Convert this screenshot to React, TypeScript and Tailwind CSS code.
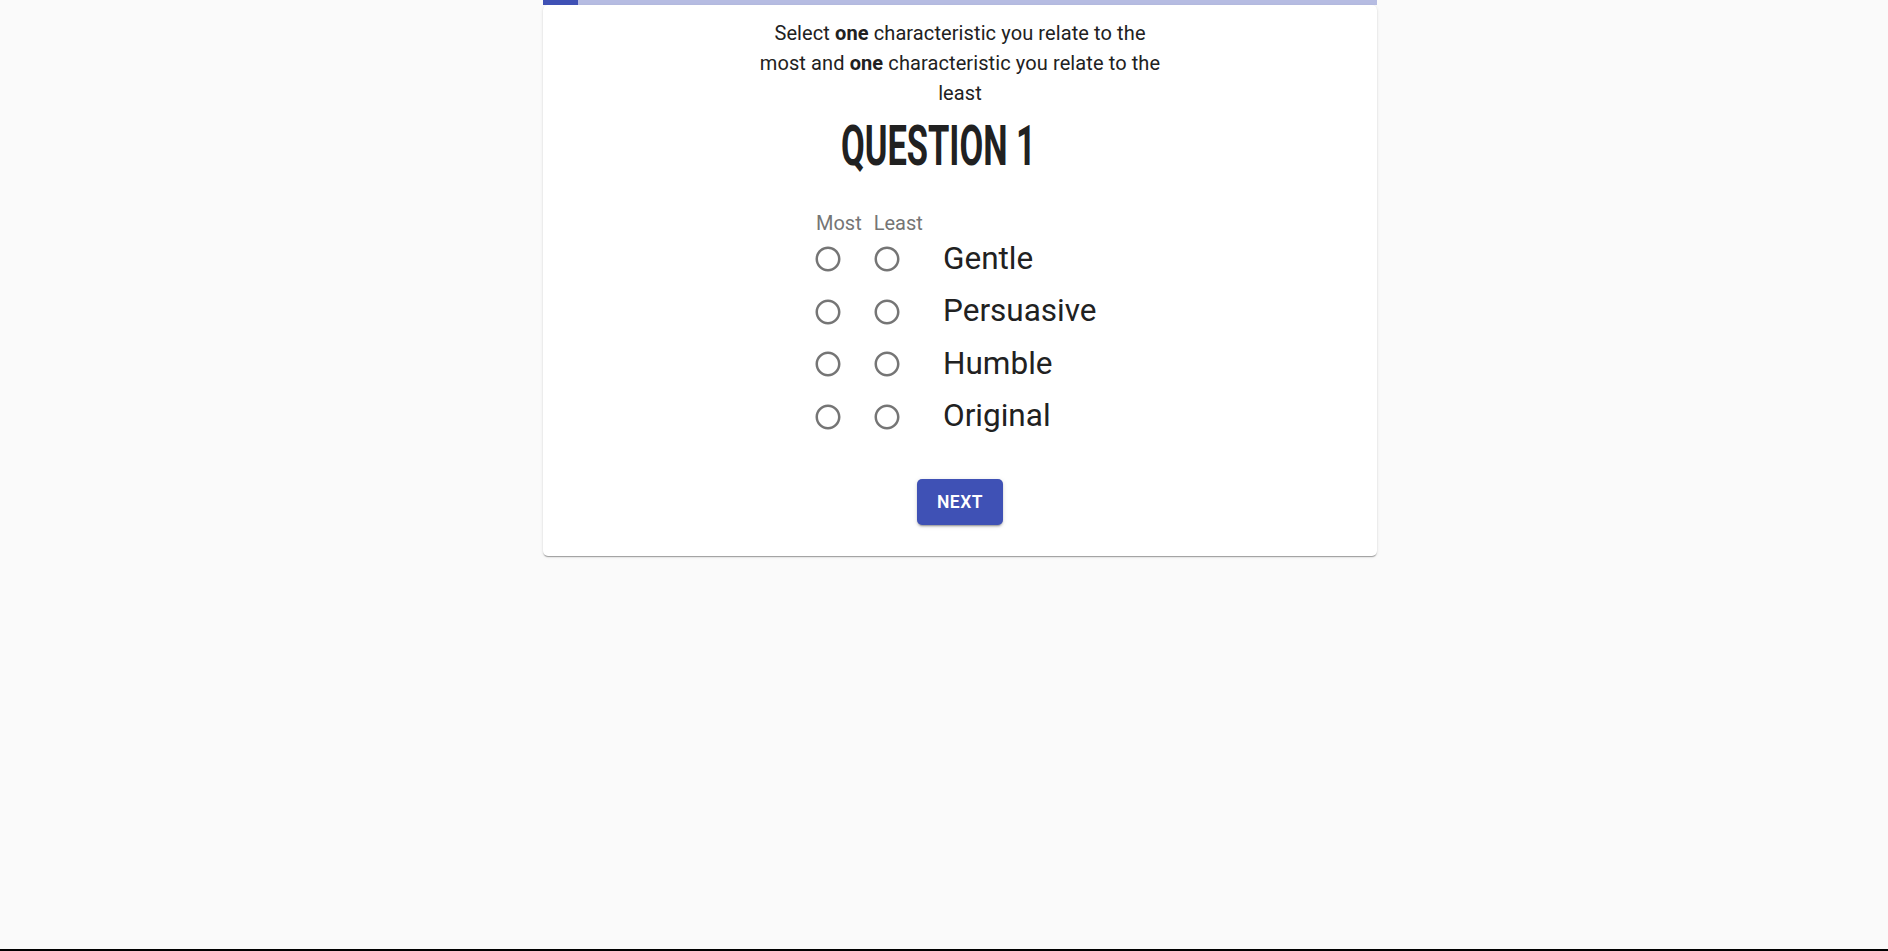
import { useState } from "react";

type Answer = "most" | "least";

const TRAITS = ["Gentle", "Persuasive", "Humble", "Original"];

function RadioIcon({ checked }: { checked: boolean }) {
  return (
    <svg viewBox="0 0 24 24" className="h-[30px] w-[30px]" fill="currentColor">
      <path d="M12 2C6.48 2 2 6.48 2 12s4.48 10 10 10 10-4.48 10-10S17.52 2 12 2zm0 18c-4.42 0-8-3.58-8-8s3.58-8 8-8 8 3.58 8 8-3.58 8-8 8z" />
      {checked && <circle cx="12" cy="12" r="5" />}
    </svg>
  );
}

// One question of the most / least questionnaire
export default function App() {
  const [picks, setPicks] = useState<Record<Answer, string | null>>({
    most: null,
    least: null,
  });

  const pick = (kind: Answer, trait: string) =>
    setPicks((p) => ({ ...p, [kind]: trait }));

  return (
    <div className="min-h-[951px] border-b-2 border-black bg-[#fafafa] font-['Roboto',sans-serif]">
      <div className="flex justify-center pl-[32px]">
        <div className="w-[834px]">
          {/* progress */}
          <div className="flex h-[5px] bg-[#b6bce2]">
            <div className="w-[35px] bg-[#3f51b5]" />
          </div>

          <div className="flex flex-col items-center rounded-[5px] bg-white pb-[31px] pt-[13px] shadow-[0_2px_1px_-1px_rgba(0,0,0,0.2),0_1px_1px_0_rgba(0,0,0,0.14),0_1px_3px_0_rgba(0,0,0,0.12)]">
            <p className="w-[416px] text-center text-[20px] leading-[30px] tracking-[0.1px] text-[#212121]">
              Select <b className="font-bold">one</b> characteristic you relate
              to the most and <b className="font-bold">one</b> characteristic
              you relate to the least
            </p>

            <h1 className="mr-[44px] mt-[10px] scale-x-[0.615] text-[56px] leading-[56px] font-bold text-[#212121]">
              QUESTION 1
            </h1>

            <div className="mt-[37px] self-start pl-[259px]">
              <div className="flex h-[24px] items-center pl-[14px] text-[20px] leading-[24px] text-[#757575]">
                <span>Most</span>
                <span className="ml-[12px]">Least</span>
              </div>

              <div className="-mt-[2px]">
                {TRAITS.map((trait) => (
                  <div key={trait} className="flex h-[52.5px] items-center">
                    <button
                      type="button"
                      onClick={() => pick("most", trait)}
                      className="flex w-[52px] justify-center text-[#757575]"
                    >
                      <RadioIcon checked={picks.most === trait} />
                    </button>
                    <button
                      type="button"
                      onClick={() => pick("least", trait)}
                      className="ml-[7px] flex w-[52px] justify-center text-[#757575]"
                    >
                      <RadioIcon checked={picks.least === trait} />
                    </button>
                    <span className="ml-[30px] pb-[1px] text-[31.5px] leading-[38px] text-[#212121]">
                      {trait}
                    </span>
                  </div>
                ))}
              </div>
            </div>

            <button
              type="button"
              className="mt-[36px] h-[46px] w-[86px] rounded-[5px] bg-[#3f51b5] text-[17.5px] font-semibold tracking-[0.5px] text-white shadow-[0_3px_1px_-2px_rgba(0,0,0,0.2),0_2px_2px_0_rgba(0,0,0,0.14),0_1px_5px_0_rgba(0,0,0,0.12)]"
            >
              NEXT
            </button>
          </div>
        </div>
      </div>
    </div>
  );
}
